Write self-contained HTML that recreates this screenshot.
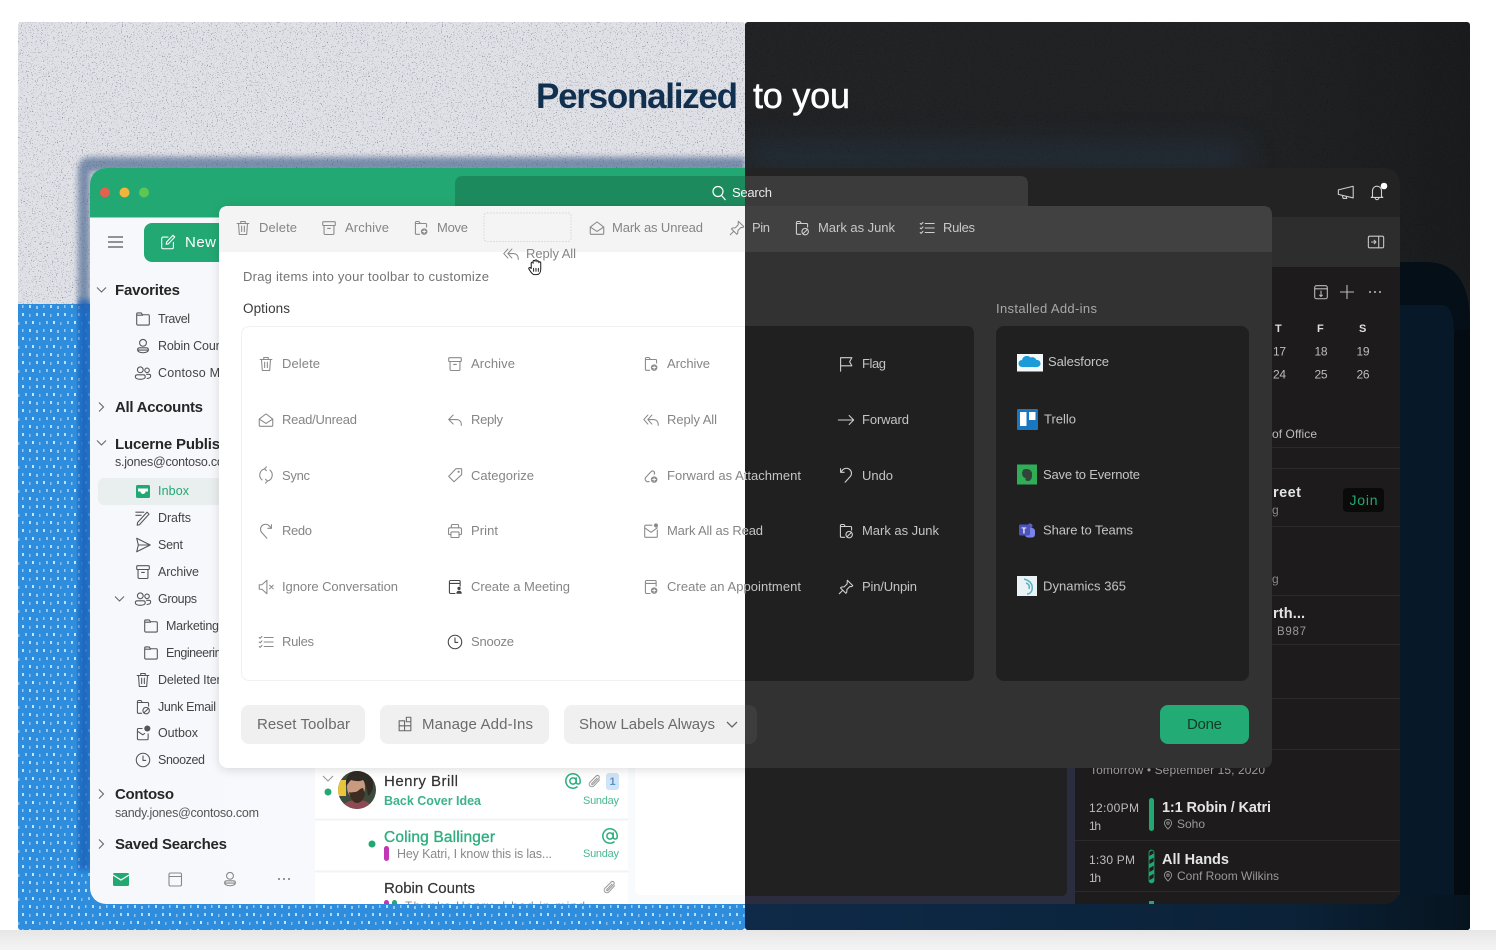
<!DOCTYPE html>
<html lang="en"><head><meta charset="utf-8"><title>Personalized to you</title>
<style>
html,body{margin:0;padding:0;width:1496px;height:950px;overflow:hidden;background:#fff}
svg{display:block;filter:blur(.35px)}
symbol{fill:none;stroke:currentColor;stroke-width:1.2;stroke-linecap:round;stroke-linejoin:round}
text{font-family:"Liberation Sans",sans-serif;font-size:13px}
.o{font-size:13px;fill:#858585}.od{font-size:13px;fill:#c4c4c4}
.s{font-size:12.5px;fill:#444}.h{font-size:15px;font-weight:bold;fill:#262626;stroke:none}
.d{font-size:12px;fill:#bdbdbd}.b{font-size:14.5px;font-weight:bold;fill:#e4e4e4}
</style></head><body>
<svg width="1496" height="950" viewBox="0 0 1496 950" xmlns="http://www.w3.org/2000/svg">
<defs>
<clipPath id="cl"><rect x="18" y="22" width="727" height="908" rx="3"/></clipPath>
<clipPath id="cr"><rect x="745" y="22" width="725" height="908" rx="3"/></clipPath>
<clipPath id="wl"><rect x="90" y="168" width="1310" height="736" rx="16"/></clipPath>
<clipPath id="av"><circle cx="357" cy="790" r="19"/></clipPath>
<linearGradient id="bot" x1="0" y1="0" x2="0" y2="1"><stop offset="0" stop-color="#e6e6e6"/><stop offset="1" stop-color="#f4f4f4"/></linearGradient>
<linearGradient id="side" x1="0" y1="0" x2="1" y2="0"><stop offset="0" stop-color="#f6f8fc"/><stop offset="1" stop-color="#f9fbfb"/></linearGradient>
<linearGradient id="strip" x1="0" y1="0" x2="1" y2="0"><stop offset="0" stop-color="#0e2a48"/><stop offset=".75" stop-color="#0b2238"/><stop offset="1" stop-color="#06141f"/></linearGradient>
<linearGradient id="topd" x1="0" y1="0" x2="1" y2="0"><stop offset="0" stop-color="#212325"/><stop offset=".7" stop-color="#202224"/><stop offset="1" stop-color="#191b1d"/></linearGradient>
<filter id="sp" x="0" y="0" width="1" height="1"><feTurbulence type="fractalNoise" baseFrequency=".8" numOctaves="2" seed="4"/><feColorMatrix values="0 0 0 0 .25  0 0 0 0 .27  0 0 0 0 .35  0 0 0 9 -5.7"/></filter>
<filter id="spk" x="0" y="0" width="1" height="1"><feTurbulence type="fractalNoise" baseFrequency=".7" numOctaves="2" seed="9"/><feColorMatrix values="0 0 0 0 0  0 0 0 0 0  0 0 0 0 0  0 0 0 9 -5.7"/></filter>
<filter id="bl3"><feGaussianBlur stdDeviation="3"/></filter>
<filter id="bl20" x="-30%" y="-200%" width="160%" height="500%"><feGaussianBlur stdDeviation="16"/></filter>
<filter id="ds" x="-5%" y="-5%" width="110%" height="110%"><feDropShadow dx="0" dy="2" stdDeviation="5" flood-color="#000" flood-opacity=".13"/></filter>
<pattern id="dots" width="21" height="24" patternUnits="userSpaceOnUse">
<rect width="21" height="24" fill="#2e8edd"/>
<g fill="#fff"><rect x="1" y="1" width="2" height="3" opacity=".7"/><rect x="8" y="2" width="1.5" height="3" opacity=".45"/><rect x="15" y="1" width="2" height="3" opacity=".65"/><rect x="4" y="9" width="2" height="3" opacity=".5"/><rect x="11" y="9" width="2" height="3" opacity=".75"/><rect x="18" y="10" width="1.5" height="3" opacity=".4"/><rect x="1" y="17" width="1.5" height="3" opacity=".5"/><rect x="8" y="17" width="2" height="3" opacity=".7"/><rect x="15" y="18" width="2" height="3" opacity=".5"/></g></pattern>
<pattern id="stripe" width="5" height="7" patternUnits="userSpaceOnUse" patternTransform="rotate(-30)"><rect width="5" height="7" fill="#1d1d1d"/><rect width="5" height="3.5" fill="#22a872"/></pattern>

<symbol id="trash" viewBox="0 0 20 20"><path d="M3.5 5h13M7.5 5V2.8h5V5M5 5l.9 12.2h8.2L15 5M8.5 8v6M11.5 8v6"/></symbol>
<symbol id="arch" viewBox="0 0 20 20"><rect x="3" y="3" width="14" height="4.2" rx="1"/><path d="M4.500 7.200V16a1.200 1.200 0 0 0 1.200 1.200h8.600a1.200 1.200 0 0 0 1.200-1.200V7.200M8.500 10.500h3"/></symbol>
<symbol id="fplus" viewBox="0 0 20 20"><path d="M8.500 17H5a1.200 1.200 0 0 1-1.200-1.200V4A1.200 1.200 0 0 1 5 2.800h2.800L9.200 5H15a1.200 1.200 0 0 1 1.200 1.200V9M3.800 5h5.400"/><circle cx="13.500" cy="14" r="3.600" fill="currentColor" stroke="none"/><path d="M13.500 12.300v3.400M11.800 14h3.400" stroke="#fff" stroke-width="1"/></symbol>
<symbol id="fjunk" viewBox="0 0 20 20"><path d="M8.500 17H5a1.200 1.200 0 0 1-1.200-1.200V4A1.200 1.200 0 0 1 5 2.800h2.800L9.200 5H15a1.200 1.200 0 0 1 1.200 1.200V9M3.800 5h5.400"/><circle cx="13.500" cy="14" r="3.600"/><path d="M11 16.500l5-5"/></symbol>
<symbol id="env" viewBox="0 0 20 20"><path d="M2.500 9L10 3.200 17.500 9v6.800a1.200 1.200 0 0 1-1.200 1.200H3.700a1.200 1.200 0 0 1-1.200-1.200zM2.500 9l7.500 4.800L17.500 9"/></symbol>
<symbol id="pin" viewBox="0 0 20 20"><path d="M11.500 2.500l6 6-1.200 1h-2l-3.300 3.300-.2 3-1 1.200-6-6 1.200-1 3-.2 3.300-3.300v-2zM6.200 13.800L2.500 17.500"/></symbol>
<symbol id="rules" viewBox="0 0 20 20"><path d="M8 5h10M8 10h10M8 15h10M2.500 5l1 1 2-2.200M2.500 10l1 1 2-2.200M2.500 15l1 1 2-2.200"/></symbol>
<symbol id="reply" viewBox="0 0 20 20"><path d="M8 4.500L3 9.500l5 5M3 9.500h9a5 5 0 0 1 5 5V16"/></symbol>
<symbol id="rall" viewBox="0 0 20 20"><path d="M6.500 4.500l-4.500 5 4.500 5M11 4.500l-4.500 5 4.500 5M6.500 9.500H13a5 5 0 0 1 5 5V16"/></symbol>
<symbol id="sync" viewBox="0 0 20 20"><path d="M8.500 3.200a7 7 0 0 0-2.800 12.300M11.500 16.800a7 7 0 0 0 2.800-12.300M10.500 1L8.300 3.200l2.200 2M9.500 19l2.200-2.200-2.200-2"/></symbol>
<symbol id="tag" viewBox="0 0 20 20"><path d="M3 11.500l8-8.500h5.800a.6.6 0 0 1 .6.6V9.500l-8.500 8z"/><circle cx="14" cy="6.500" r=".6"/></symbol>
<symbol id="clipp" viewBox="0 0 20 20"><path d="M16 8L9 15.500a3.200 3.200 0 0 1-4.500-4.500l7.500-7.500a2 2 0 0 1 3 3l-7 7a.8.8 0 0 1-1.200-1.200L13 6"/></symbol>
<symbol id="fatt" viewBox="0 0 20 20"><path d="M8 16a3 3 0 0 1-3.800-4.500l6-6.500a2.300 2.300 0 0 1 3.400 3"/><circle cx="13.500" cy="14" r="3.600" fill="currentColor" stroke="none"/><path d="M13.500 12.300v3.400M11.800 14h3.400" stroke="#fff" stroke-width="1"/></symbol>
<symbol id="redo" viewBox="0 0 20 20"><path d="M11 18L5.500 12a5.500 5.500 0 0 1 8-7.800l2.500 2.800M16 3v4h-4"/></symbol>
<symbol id="undo" viewBox="0 0 20 20"><path d="M9 18l5.500-6a5.500 5.500 0 0 0-8-7.800L4 7M4 3v4h4"/></symbol>
<symbol id="print" viewBox="0 0 20 20"><path d="M6 6.500V4a1.200 1.200 0 0 1 1.200-1.200h5.600A1.200 1.200 0 0 1 14 4v2.500M5.500 14H4a1.200 1.200 0 0 1-1.200-1.200V8A1.500 1.500 0 0 1 4.300 6.500h11.400A1.500 1.500 0 0 1 17.200 8v4.800A1.200 1.200 0 0 1 16 14h-1.500"/><rect x="5.500" y="11" width="9" height="6.200" rx="1"/></symbol>
<symbol id="mark" viewBox="0 0 20 20"><path d="M11 3.500H4.200A1.200 1.200 0 0 0 3 4.700v11.100A1.200 1.200 0 0 0 4.200 17h11.600a1.200 1.200 0 0 0 1.200-1.200V9M3 6.500l7 5 7-5"/><circle cx="15.500" cy="3.800" r="2.300" fill="currentColor" stroke="none"/></symbol>
<symbol id="mute" viewBox="0 0 20 20"><path d="M2.500 7.500v5h3L11 17.500v-15L5.500 7.500zM14 8l4 4M18 8l-4 4"/></symbol>
<symbol id="mtg" viewBox="0 0 20 20"><path d="M10 17.200H5a1.200 1.200 0 0 1-1.200-1.200V4A1.200 1.200 0 0 1 5 2.800h9.500A1.200 1.200 0 0 1 15.700 4v5M3.800 6h11.900"/><circle cx="14.500" cy="11.500" r="1.800" fill="currentColor" stroke="none"/><path d="M11.500 17.500c0-2.200 1.200-3.300 3-3.300s3 1.100 3 3.300z" fill="currentColor" stroke="none"/></symbol>
<symbol id="appt" viewBox="0 0 20 20"><path d="M9 17.200H5a1.200 1.200 0 0 1-1.200-1.200V4A1.200 1.200 0 0 1 5 2.800h9.500A1.200 1.200 0 0 1 15.700 4v5M3.800 6h11.900"/><circle cx="13.500" cy="14" r="3.600" fill="currentColor" stroke="none"/><path d="M13.500 12.300v3.400M11.800 14h3.400" stroke="#fff" stroke-width="1"/></symbol>
<symbol id="clock" viewBox="0 0 20 20"><circle cx="10" cy="10" r="7.500"/><path d="M10 5.500V10.500H13"/></symbol>
<symbol id="flag" viewBox="0 0 20 20"><path d="M4 18V3h12.500l-2.500 4.500 2.500 4.500H4"/></symbol>
<symbol id="fwd" viewBox="0 0 20 20"><path d="M1.500 10h17M13.500 5l5 5-5 5"/></symbol>
<symbol id="folder" viewBox="0 0 20 20"><path d="M3 15.500V4.500A1.200 1.200 0 0 1 4.200 3.300H8L9.500 5.300h6.300A1.200 1.200 0 0 1 17 6.500v9a1.200 1.200 0 0 1-1.200 1.200H4.200A1.200 1.200 0 0 1 3 15.500zM3 5.800h6.500"/></symbol>
<symbol id="person" viewBox="0 0 20 20"><circle cx="10" cy="6.500" r="3.800"/><path d="M4 14.200c0-1.500 1-2.200 2.500-2.200h7c1.500 0 2.500.7 2.500 2.200 0 2-2.500 3.300-6 3.300s-6-1.300-6-3.300zM4 14.500h12"/></symbol>
<symbol id="people" viewBox="0 0 20 20"><circle cx="7" cy="6.500" r="3.200"/><circle cx="14.500" cy="7" r="2.500"/><path d="M1.500 14c0-1.500 1-2 2.200-2h6.600c1.200 0 2.200.5 2.200 2 0 2-2.500 3-5.500 3s-5.500-1-5.500-3zM14 11.500h2.500c1.200 0 2 .6 2 1.800 0 1.700-1.800 2.700-4 2.700"/></symbol>
<symbol id="drafts" viewBox="0 0 20 20"><path d="M6 17.500l-2.500.5.500-3L14.500 3.500l2.200 2.200zM2 3.500h9M2 7h6"/></symbol>
<symbol id="sent" viewBox="0 0 20 20"><path d="M3 2.500L18 10 3 17.500l1.800-7.500zM4.800 10H18"/></symbol>
<symbol id="outbox" viewBox="0 0 20 20"><path d="M9 5H5A1.200 1.200 0 0 0 3.800 6.200v10.100A1.200 1.200 0 0 0 5 17.500h9.500a1.200 1.200 0 0 0 1.200-1.200V11M3.800 8l6 4 2-1.500"/><circle cx="14.800" cy="5" r="3.400" fill="currentColor" stroke="none"/></symbol>
<symbol id="at" viewBox="0 0 20 20"><circle cx="10" cy="10" r="3.500" stroke-width="1.700"/><path d="M13.500 6.500V11.500a2.300 2.300 0 0 0 4.500 0V10a8 8 0 1 0-3.500 6.600" stroke-width="1.700"/></symbol>
<symbol id="mega" viewBox="0 0 20 20"><path d="M1.500 6.500L18 2.500v13L1.500 11.500zM6 13l.8 3h4l-.5-2"/></symbol>
<symbol id="bell" viewBox="0 0 20 20"><path d="M5 15V8.500a5 5 0 0 1 10 0V15l1.500 1h-13zM8 16.500a2 2 0 0 0 4 0"/></symbol>
<symbol id="collapse" viewBox="0 0 20 20"><rect x="1.500" y="3.500" width="17" height="13" rx="1.500"/><path d="M13 3.500v13M5 10h5M8 8l2 2-2 2"/></symbol>
<symbol id="calup" viewBox="0 0 20 20"><rect x="3" y="3" width="14" height="14.500" rx="2"/><path d="M3 6.500h14M10 9v6M8.500 13.500l1.500 1.500 1.500-1.500"/></symbol>
<symbol id="addin" viewBox="0 0 20 20"><path d="M3.500 6.500h6v11h-6zM3.500 12h13v5.500h-7M9.500 6.500V12h7V6.500M11.500 2.500h5v5h-5z"/></symbol>
<symbol id="edit" viewBox="0 0 20 20"><path d="M16 10.500V16a1.500 1.500 0 0 1-1.500 1.500h-10A1.500 1.500 0 0 1 3 16V6a1.500 1.500 0 0 1 1.500-1.500H10M8 12.500l.5-2.500 7-7.500 2 2-7 7.500z"/></symbol>
<symbol id="loc" viewBox="0 0 20 20"><path d="M10 18.500c-4-4.200-6-7-6-10a6 6 0 0 1 12 0c0 3-2 5.800-6 10z" stroke-width="1.500"/><circle cx="10" cy="8.500" r="2" stroke-width="1.500"/></symbol>
<symbol id="hand" viewBox="0 0 20 20"><path d="M5.500 11V5.500a1 1 0 0 1 2 0V3.500a1 1 0 0 1 2 0V3a1 1 0 0 1 2 0v1a1 1 0 0 1 2 0V5a1 1 0 0 1 2 0v7c0 3-1.500 5.500-4.500 5.500H9c-2 0-3-1.500-4-3l-2-3c-.5-1 1-2 2-1zM8 11v3M10.500 11v3M13 11v3" fill="#fff" stroke="#222" stroke-width="1.100"/></symbol>
</defs>

<rect y="930" width="1496" height="20" fill="url(#bot)"/>

<!-- LEFT HALF -->
<g clip-path="url(#cl)">
<rect x="18" y="22" width="727" height="908" fill="#e0e1e6"/>
<rect x="18" y="22" width="727" height="290" filter="url(#sp)"/>
<rect x="18" y="304" width="727" height="626" fill="url(#dots)"/>
<path d="M90 157 H745 V172 H90 V310 H78 V172 Q78 157 90 157Z" fill="#3d5c88" opacity=".62" filter="url(#bl3)"/>
<rect x="78" y="300" width="13" height="570" fill="#1c63bb" opacity=".85" filter="url(#bl3)"/>
<g clip-path="url(#wl)">
<rect x="90" y="168" width="700" height="736" fill="url(#side)"/>
<rect x="90" y="168" width="700" height="50" fill="#22a872"/>
<rect x="90" y="217" width="700" height="1" fill="#8fd3b7"/>
<path d="M455 218V184q0-8 8-8H760v42z" fill="#1d8a5e"/>
<circle cx="105" cy="192.500" r="5" fill="#e4604f"/><circle cx="124.500" cy="192.500" r="5" fill="#f0b53c"/><circle cx="144" cy="192.500" r="5" fill="#5ec654"/>
<path d="M108 237h15M108 242h15M108 247h15" stroke="#555" stroke-width="1.300"/>
<rect x="144" y="223" width="120" height="39" rx="8" fill="#22a872"/>
<g color="#fff"><use href="#edit" x="159" y="233" width="18" height="18"/></g>
<text x="185" y="247" textLength="31" style="font-size:15px;fill:#fff">New</text>
<!-- list -->
<rect x="315" y="640" width="313" height="264" fill="#fff"/>
<rect x="315" y="818.500" width="313" height="2" fill="#f0f3f5"/><rect x="315" y="870.500" width="313" height="2" fill="#f0f3f5"/>
<rect x="635" y="640" width="130" height="255" rx="6" fill="#fff"/>
<path d="M323 776l5 5 5-5" fill="none" stroke="#999" stroke-width="1.100"/>
<circle cx="328" cy="792" r="3.500" fill="#22a872"/>
<g clip-path="url(#av)"><rect x="338" y="771" width="38" height="38" fill="#3d4a3c"/><rect x="338" y="780" width="8" height="16" fill="#e9c53c"/><path d="M340 812c2-10 10-12 18-12s14 3 16 12z" fill="#8d4a52"/><ellipse cx="356" cy="787" rx="9" ry="12" fill="#c99a80"/><path d="M346 786c-1-12 6-16 14-16s14 6 13 16c0 4-2 8-5 10-1-8-3-14-5-16-4 2-9 1-12 0-2 2-3 4-5 6z" fill="#2f2a24"/><path d="M349 792c2 1 3 0 6 0s5-4 8-4l2 6c-1 5-4 9-8 9s-7-5-8-11z" fill="#3d2c22"/></g>
<text x="384" y="786" textLength="74" style="font-size:15px;fill:#333;stroke:#333;stroke-width:.2">Henry Brill</text>
<text x="384" y="805" textLength="97" style="font-size:12.500px;font-weight:bold;fill:#3cb388">Back Cover Idea</text>
<g color="#2fae80"><use href="#at" x="564" y="772" width="18" height="18"/><use href="#at" x="601" y="827" width="18" height="18"/></g>
<g color="#999"><use href="#clipp" x="586" y="773" width="17" height="17"/><use href="#clipp" x="601" y="879" width="17" height="17"/></g>
<rect x="606" y="773" width="13" height="17" rx="3" fill="#cfe4f6"/><text x="609.500" y="785" style="font-size:11px;font-weight:bold;fill:#5a94c4">1</text>
<text x="583" y="804" textLength="36" style="font-size:11px;fill:#49b890">Sunday</text>
<text x="583" y="857" textLength="36" style="font-size:11px;fill:#49b890">Sunday</text>
<circle cx="372" cy="844" r="3.500" fill="#22a872"/>
<text x="384" y="842" textLength="111" style="font-size:15.500px;fill:#2fae80;stroke:#2fae80;stroke-width:.35">Coling Ballinger</text>
<rect x="384" y="846" width="5" height="15" rx="2.500" fill="#c237b4"/>
<text x="397" y="858" textLength="155" style="font-size:12.500px;fill:#8a8a8a">Hey Katri, I know this is las...</text>
<text x="384" y="893" textLength="91" style="font-size:15px;fill:#333;stroke:#333;stroke-width:.2">Robin Counts</text>
<rect x="384" y="900" width="5" height="10" rx="2.500" fill="#c237b4"/><rect x="392" y="900" width="5" height="10" rx="2.500" fill="#22a872"/>
<text x="405" y="910" textLength="180" style="font-size:12px;fill:#8a8a8a">Thanks Henry, I had in mind</text>
<!-- sidebar -->
<g fill="none" stroke="#666" stroke-width="1.100"><path d="M97 287.500l4.500 4.500 4.500-4.500M99 402.500l4.500 4.500-4.500 4.500M97 440.500l4.500 4.500 4.500-4.500M115 596.500l4.500 4.500 4.500-4.500M99 789.500l4.500 4.500-4.500 4.500M99 839.500l4.500 4.500-4.500 4.500"/></g>
<text x="115" y="295" class="h" textLength="65">Favorites</text>
<text x="115" y="412" class="h" textLength="88">All Accounts</text>
<text x="115" y="449" class="h" textLength="136">Lucerne Publishing</text>
<text x="115" y="799" class="h" textLength="59">Contoso</text>
<text x="115" y="849" class="h" textLength="112">Saved Searches</text>
<text x="115" y="466" class="s" textLength="119">s.jones@contoso.com</text>
<text x="115" y="817" class="s" textLength="144" style="fill:#555">sandy.jones@contoso.com</text>
<rect x="98" y="478" width="140" height="27" rx="6" fill="#e9eeee"/>
<text x="158" y="495" class="s" textLength="31" style="fill:#22a872">Inbox</text>
<path d="M136 486.500a1.500 1.500 0 0 1 1.500-1.500h11a1.500 1.500 0 0 1 1.500 1.500v10a1.500 1.500 0 0 1-1.500 1.500h-11a1.500 1.500 0 0 1-1.500-1.500z" fill="#22a872"/><path d="M138 488.500h10v3h-2.500a2.500 2.500 0 0 1-5 0H138z" fill="#fff"/>
<g color="#555">
<use href="#folder" x="134" y="310" width="18" height="18"/><use href="#person" x="134" y="337" width="18" height="18"/><use href="#people" x="134" y="364" width="18" height="18"/>
<use href="#drafts" x="134" y="509" width="18" height="18"/><use href="#sent" x="134" y="536" width="18" height="18"/><use href="#arch" x="134" y="563" width="18" height="18"/><use href="#people" x="134" y="590" width="18" height="18"/>
<use href="#folder" x="142" y="617" width="18" height="18"/><use href="#folder" x="142" y="644" width="18" height="18"/><use href="#trash" x="134" y="671" width="18" height="18"/><use href="#fjunk" x="134" y="698" width="18" height="18"/><use href="#outbox" x="134" y="724" width="18" height="18"/><use href="#clock" x="134" y="751" width="18" height="18"/>
</g>
<text class="s" x="158" y="323" textLength="32">Travel</text><text class="s" x="158" y="350" textLength="74">Robin Counts</text><text class="s" x="158" y="377" textLength="108">Contoso Marketing</text>
<text class="s" x="158" y="522" textLength="33">Drafts</text><text class="s" x="158" y="549" textLength="25">Sent</text><text class="s" x="158" y="576" textLength="41">Archive</text><text class="s" x="158" y="603" textLength="39">Groups</text>
<text class="s" x="166" y="630" textLength="53">Marketing</text><text class="s" x="166" y="657" textLength="62">Engineering</text><text class="s" x="158" y="684" textLength="75">Deleted Items</text><text class="s" x="158" y="711" textLength="58">Junk Email</text><text class="s" x="158" y="737" textLength="40">Outbox</text><text class="s" x="158" y="764" textLength="47">Snoozed</text>
<rect x="113" y="873" width="16" height="13" rx="1.500" fill="#22a872"/><path d="M113 875l8 5 8-5" fill="none" stroke="#fff" stroke-width="1.200"/>
<rect x="169" y="873" width="12.500" height="13" rx="1.500" fill="none" stroke="#888" stroke-width="1.100"/><path d="M169 876.500h12.500" stroke="#888"/>
<g color="#888"><use href="#person" x="221" y="870" width="18" height="18"/></g>
<circle cx="279" cy="879" r="1" fill="#777"/><circle cx="284" cy="879" r="1" fill="#777"/><circle cx="289" cy="879" r="1" fill="#777"/>
</g>
<!-- dialog left -->
<rect x="219" y="206" width="600" height="562" rx="9" fill="#fff" filter="url(#ds)"/>
<path d="M219 252V215q0-9 9-9H800v46z" fill="#f4f4f4"/>
<path d="M745 326.500H250q-8.500 0-8.500 8.500v337q0 8.500 8.500 8.500H745" fill="#fff" stroke="#f1f1f1"/>
<rect x="484" y="213" width="87" height="28.500" rx="3" fill="none" stroke="#d6d6d6" stroke-dasharray="1.500 1.500"/>
<g color="#8a8a8a">
<use href="#trash" x="234" y="219" width="18" height="18"/><use href="#arch" x="320" y="219" width="18" height="18"/><use href="#fplus" x="412" y="219" width="18" height="18"/><use href="#env" x="588" y="219" width="18" height="18"/><use href="#pin" x="728" y="219" width="18" height="18"/>
<use href="#rall" x="502" y="245" width="18" height="18"/>
<use href="#trash" x="257" y="355" width="18" height="18"/><use href="#arch" x="446" y="355" width="18" height="18"/><use href="#fplus" x="642" y="355" width="18" height="18"/>
<use href="#env" x="257" y="411" width="18" height="18"/><use href="#reply" x="446" y="411" width="18" height="18"/><use href="#rall" x="642" y="411" width="18" height="18"/>
<use href="#sync" x="257" y="466" width="18" height="18"/><use href="#tag" x="446" y="466" width="18" height="18"/><use href="#fatt" x="642" y="467" width="18" height="18"/>
<use href="#redo" x="257" y="522" width="18" height="18"/><use href="#print" x="446" y="522" width="18" height="18"/><use href="#mark" x="642" y="522" width="18" height="18"/>
<use href="#mute" x="257" y="578" width="18" height="18"/><use href="#appt" x="642" y="578" width="18" height="18"/>
<use href="#rules" x="257" y="633" width="18" height="18"/>
</g>
<g color="#444"><use href="#mtg" x="446" y="578" width="18" height="18"/><use href="#clock" x="446" y="633" width="18" height="18"/></g>
<text class="o" x="259" y="232" textLength="38">Delete</text><text class="o" x="345" y="232" textLength="44">Archive</text><text class="o" x="437" y="232" textLength="31">Move</text><text class="o" x="612" y="232" textLength="91">Mark as Unread</text>
<text class="o" x="526" y="258" textLength="50">Reply All</text>
<use href="#hand" x="526" y="258" width="19" height="19"/>
<text x="243" y="281" textLength="246" style="font-size:13px;fill:#737373">Drag items into your toolbar to customize</text>
<text x="243" y="313" textLength="47" style="font-size:13.500px;fill:#3a3a3a">Options</text>
<text class="o" x="282" y="368" textLength="38">Delete</text><text class="o" x="471" y="368" textLength="44">Archive</text><text class="o" x="667" y="368" textLength="43">Archive</text>
<text class="o" x="282" y="424" textLength="75">Read/Unread</text><text class="o" x="471" y="424" textLength="32">Reply</text><text class="o" x="667" y="424" textLength="50">Reply All</text>
<text class="o" x="282" y="480" textLength="28">Sync</text><text class="o" x="471" y="480" textLength="63">Categorize</text><text class="o" x="667" y="480" textLength="134">Forward as Attachment</text>
<text class="o" x="282" y="535" textLength="30">Redo</text><text class="o" x="471" y="535" textLength="27">Print</text><text class="o" x="667" y="535" textLength="96">Mark All as Read</text>
<text class="o" x="282" y="591" textLength="116">Ignore Conversation</text><text class="o" x="471" y="591" textLength="99">Create a Meeting</text><text class="o" x="667" y="591" textLength="134">Create an Appointment</text>
<text class="o" x="282" y="646" textLength="32">Rules</text><text class="o" x="471" y="646" textLength="43">Snooze</text>
<rect x="241" y="705" width="124" height="39" rx="8" fill="#f0f0f0"/><rect x="380" y="705" width="169" height="39" rx="8" fill="#f0f0f0"/><rect x="564" y="705" width="193" height="39" rx="8" fill="#f0f0f0"/>
<text x="257" y="729" textLength="93" style="font-size:15px;fill:#6b6b6b">Reset Toolbar</text>
<g color="#666"><use href="#addin" x="396" y="715" width="18" height="18"/></g>
<text x="422" y="729" textLength="111" style="font-size:15px;fill:#6b6b6b">Manage Add-Ins</text>
<text x="579" y="729" textLength="136" style="font-size:15px;fill:#6b6b6b">Show Labels Always</text>
<path d="M727 722l5 5 5-5" fill="none" stroke="#666" stroke-width="1.300"/>
<circle cx="718" cy="191.500" r="5" fill="none" stroke="#fff" stroke-width="1.200"/><path d="M721.500 195.500l4 4.500" stroke="#fff" stroke-width="1.200"/>
<text x="732" y="197" textLength="40" style="font-size:13px;fill:#fff">Search</text>
<text x="536" y="108" textLength="202" style="font-size:35px;font-weight:bold;fill:#11304f">Personalized</text>
</g>

<!-- RIGHT HALF -->
<g clip-path="url(#cr)">
<rect x="745" y="22" width="725" height="908" fill="url(#topd)"/>
<rect x="745" y="22" width="725" height="300" filter="url(#spk)" opacity=".22"/>
<rect x="745" y="145" width="500" height="24" fill="#2a4560" opacity=".4" filter="url(#bl20)"/>
<path d="M1400 262h26q44 0 44 62V930H1400z" fill="#050f18"/>
<path d="M1400 305h42q12 0 12 30V930H1400z" fill="#071828"/>
<rect x="1454" y="330" width="16" height="600" fill="#040b12"/>
<rect x="745" y="895" width="725" height="35" fill="url(#strip)"/>
<g clip-path="url(#wl)">
<rect x="745" y="168" width="655" height="736" fill="#232323"/>
<rect x="745" y="217" width="655" height="50" fill="#2d2d2d"/>
<path d="M745 176H1020q8 0 8 8v34H745z" fill="#3b3b3b"/>
<rect x="745" y="267" width="655" height="637" fill="#2b2c3d"/>
<path d="M745 640H1067V890q0 6-6 6H745z" fill="#212121"/>
<rect x="1075" y="267" width="325" height="637" fill="#1d1b1c"/>
<g fill="#2a2a2a"><rect x="1075" y="447" width="325" height="1"/><rect x="1075" y="468" width="325" height="1"/><rect x="1075" y="526" width="325" height="1"/><rect x="1075" y="595" width="325" height="1"/><rect x="1075" y="644" width="325" height="1"/><rect x="1075" y="698" width="325" height="1"/><rect x="1075" y="749" width="325" height="1"/><rect x="1075" y="840" width="325" height="1"/><rect x="1075" y="891" width="325" height="1"/></g>
<g color="#cfcfcf"><use href="#mega" x="1337" y="184" width="18" height="18"/><use href="#bell" x="1368" y="183" width="18" height="18"/></g>
<circle cx="1384" cy="186" r="3.300" fill="#fff"/>
<g color="#c8c8c8"><use href="#collapse" x="1367" y="233" width="18" height="18"/></g>
<g color="#bbb"><use href="#calup" x="1312" y="283" width="18" height="18"/></g>
<path d="M1347 285v14M1340 292h14" stroke="#bbb" stroke-width="1.100"/>
<circle cx="1370" cy="292" r="1" fill="#bbb"/><circle cx="1375" cy="292" r="1" fill="#bbb"/><circle cx="1380" cy="292" r="1" fill="#bbb"/>
<text x="1275" y="332" style="font-size:11px;font-weight:bold;fill:#ddd">T</text><text x="1317" y="332" style="font-size:11px;font-weight:bold;fill:#ddd">F</text><text x="1359" y="332" style="font-size:11px;font-weight:bold;fill:#ddd">S</text>
<text class="d" x="1273" y="355.500" textLength="13">17</text><text class="d" x="1314.500" y="355.500" textLength="13">18</text><text class="d" x="1356.500" y="355.500" textLength="13">19</text>
<text class="d" x="1273" y="378.500" textLength="13">24</text><text class="d" x="1314.500" y="378.500" textLength="13">25</text><text class="d" x="1356.500" y="378.500" textLength="13">26</text>
<text class="d" x="1272" y="438" textLength="45">of Office</text>
<text class="b" x="1273" y="497" textLength="28">reet</text>
<text x="1272" y="514" style="font-size:12px;fill:#888">g</text><text x="1272" y="583" style="font-size:12px;fill:#888">g</text>
<rect x="1343" y="488" width="41" height="24" rx="4" fill="#0a0a0a"/><text x="1349.500" y="505" textLength="28" style="font-size:14px;fill:#22a872">Join</text>
<text class="b" x="1273" y="618" textLength="32">rth...</text>
<text x="1277" y="635" textLength="29" style="font-size:11.500px;fill:#9a9a9a">B987</text>
<text x="1090" y="774" textLength="175" style="font-size:12px;fill:#9a9a9a">Tomorrow • September 15, 2020</text>
<text class="d" x="1089" y="812" textLength="50">12:00PM</text><text class="d" x="1089" y="830" textLength="12">1h</text>
<rect x="1149" y="798" width="5" height="33" rx="2.500" fill="#22a872"/>
<text class="b" x="1162" y="812" textLength="109">1:1 Robin / Katri</text>
<text x="1177" y="828" textLength="28" style="font-size:12px;fill:#999">Soho</text>
<text class="d" x="1089" y="864" textLength="46">1:30 PM</text><text class="d" x="1089" y="882" textLength="12">1h</text>
<rect x="1149" y="850" width="5" height="33" rx="2.500" fill="url(#stripe)" stroke="#22a872" stroke-width=".8"/>
<text class="b" x="1162" y="864" textLength="67">All Hands</text>
<text x="1177" y="880" textLength="102" style="font-size:12px;fill:#999">Conf Room Wilkins</text>
<g color="#999"><use href="#loc" x="1162" y="818" width="12" height="12"/><use href="#loc" x="1162" y="870" width="12" height="12"/></g>
<rect x="1149" y="901" width="5" height="4" fill="#22a872"/>
</g>
<path d="M745 206H1263q9 0 9 9V759q0 9-9 9H745z" fill="#323232"/>
<path d="M745 206H1263q9 0 9 9V252H745z" fill="#414141"/>
<g color="#cfcfcf"><use href="#pin" x="728" y="219" width="18" height="18"/><use href="#fjunk" x="793" y="219" width="18" height="18"/><use href="#rules" x="918" y="219" width="18" height="18"/></g>
<text x="752" y="232" textLength="18" style="font-size:13px;fill:#c8c8c8">Pin</text><text x="818" y="232" textLength="77" style="font-size:13px;fill:#c8c8c8">Mark as Junk</text><text x="943" y="232" textLength="32" style="font-size:13px;fill:#c8c8c8">Rules</text>
<text x="996" y="313" textLength="101" style="font-size:13px;fill:#a8a8a8">Installed Add-ins</text>
<path d="M745 326H966q8 0 8 8V673q0 8-8 8H745z" fill="#202020"/>
<rect x="996" y="326" width="253" height="355" rx="8" fill="#202020"/>
<text class="od" x="667" y="480" textLength="134">Forward as Attachment</text><text class="od" x="667" y="535" textLength="96">Mark All as Read</text><text class="od" x="667" y="591" textLength="134">Create an Appointment</text>
<g color="#d0d0d0"><use href="#flag" x="837" y="355" width="18" height="18"/><use href="#fwd" x="837" y="411" width="18" height="18"/><use href="#undo" x="837" y="466" width="18" height="18"/><use href="#fjunk" x="837" y="522" width="18" height="18"/><use href="#pin" x="837" y="578" width="18" height="18"/></g>
<text class="od" x="862" y="368" textLength="24">Flag</text><text class="od" x="862" y="424" textLength="47">Forward</text><text class="od" x="862" y="480" textLength="31">Undo</text><text class="od" x="862" y="535" textLength="77">Mark as Junk</text><text class="od" x="862" y="591" textLength="55">Pin/Unpin</text>
<rect x="1017" y="354" width="26" height="17.500" fill="#f4f8fa"/><path d="M1022 367a3.500 3.500 0 0 1 0-7 5 5 0 0 1 8.500-2.500 4.500 4.500 0 0 1 6 2.500 3.500 3.500 0 0 1 1 7z" fill="#1b9bd8"/>
<rect x="1017" y="409" width="21" height="21" rx="1" fill="#1a76bf"/><rect x="1020" y="412" width="6.500" height="14" fill="#fff"/><rect x="1029" y="412" width="6.500" height="8" fill="#fff"/>
<rect x="1017" y="464.500" width="20" height="20" fill="#2fae57"/><path d="M1023 470c3-2 8-1 9 3 .5 5-1 8-4 8s-3-2-2-3c-3 0-4-3-4-5z" fill="#33433a"/>
<circle cx="1030" cy="526" r="2.500" fill="#5b5fc7"/><rect x="1025" y="528" width="10" height="9.500" rx="3" fill="#7b83eb"/><rect x="1019" y="524.500" width="11" height="11" rx="1.500" fill="#4b53bc"/><text x="1021.500" y="533.500" style="font-size:8px;font-weight:bold;fill:#fff">T</text>
<rect x="1017" y="576" width="20" height="20" fill="#e9f3f5"/><path d="M1024 579c7 2 9 6 8 11-1 3-3 4-5 4M1026 583c3 1 4 3 3 6" fill="none" stroke="#5fb2c5" stroke-width="1.500"/>
<text class="od" x="1048" y="366" textLength="61">Salesforce</text><text class="od" x="1044" y="423.500" textLength="32">Trello</text><text class="od" x="1043" y="479" textLength="97">Save to Evernote</text><text class="od" x="1043" y="534.500" textLength="90">Share to Teams</text><text class="od" x="1043" y="590.500" textLength="83">Dynamics 365</text>
<rect x="700" y="705" width="57" height="39" rx="8" fill="#3d3d3d"/>
<rect x="1160" y="705" width="89" height="39" rx="8" fill="#22ab74"/>
<text x="1187" y="729" textLength="35" style="font-size:15px;fill:#0f3c2a">Done</text>
<text x="732" y="197" textLength="40" style="font-size:13px;fill:#e8e8e8">Search</text>
<text x="753" y="108" textLength="97" style="font-size:36px;fill:#fff;stroke:#fff;stroke-width:.5">to you</text>
</g>
</svg>
</body></html>
